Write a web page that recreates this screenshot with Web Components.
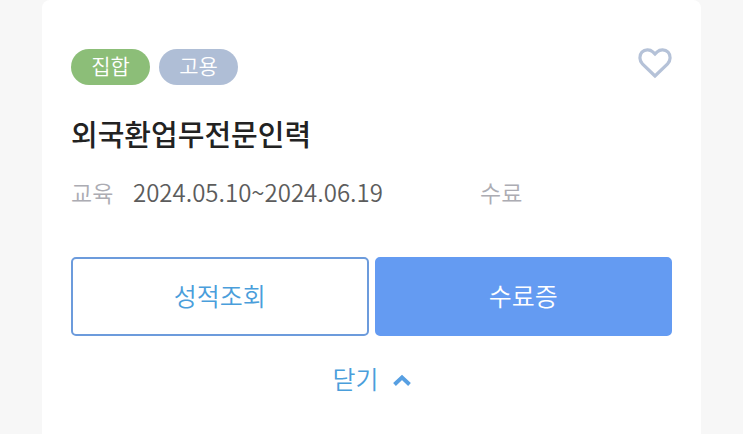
<!DOCTYPE html>
<html lang="ko">
<head>
<meta charset="utf-8">
<meta name="viewport" content="width=device-width, initial-scale=1">
<title>외국환업무전문인력</title>
<style>
body { margin: 0; min-height: 100vh; background: #f7f7f7; font-family: "Noto Sans CJK KR", sans-serif; color: #222; }
</style>
</head>
<body>
<course-card>
  <course-tag slot="tags">집합</course-tag>
  <course-tag slot="tags" tone="blue">고용</course-tag>
  <like-button slot="like"></like-button>
  <span slot="title">외국환업무전문인력</span>
  <course-meta slot="meta" label="교육" status="수료">2024.05.10~2024.06.19</course-meta>
  <action-button slot="actions">성적조회</action-button>
  <action-button slot="actions" tone="solid">수료증</action-button>
  <fold-toggle slot="toggle">닫기</fold-toggle>
</course-card>
<script>
const define = (name, html, setup) => customElements.define(name, class extends HTMLElement {
  constructor() {
    super();
    this.attachShadow({ mode: "open" }).innerHTML = html;
  }
  connectedCallback() { if (setup) setup(this, this.shadowRoot); }
});

define("course-tag", `
<style>
:host { display: flex; align-items: center; justify-content: center; box-sizing: border-box; min-width: 79px; height: 36px; padding: 0 16px 4px; border-radius: 18px; background: #8cbe78; color: #fff; font-size: 21px; line-height: 28px; font-weight: 350; }
:host([tone="blue"]) { background: #afbed6; }
</style><slot></slot>`);

define("like-button", `
<style>
:host { display: block; }
button { display: block; border: 0; padding: 0; background: none; cursor: pointer; }
svg { display: block; }
</style>
<button type="button" aria-label="관심 과정"><svg width="34" height="32" viewBox="0 0 34 32" fill="none" stroke="#b5c2d8" stroke-width="3.2" stroke-linejoin="miter"><path d="M17 28L4.400 15.800C1.200 12.600 1.100 7.200 3.900 4.200C6.900 1.100 11.800 1 14.800 3.800L17 6L19.200 3.800C22.200 1 27.100 1.100 30.100 4.200C32.900 7.200 32.800 12.600 29.600 15.800Z"/></svg></button>`);

define("course-meta", `
<style>
:host { display: grid; grid-template-columns: 62px minmax(0, 347px) auto; align-items: center; font-size: 24px; line-height: 32px; font-weight: 350; color: #5c5c5c; white-space: nowrap; }
.muted { color: #acacb3; font-size: 23px; }
</style>
<span class="muted" id="label"></span><slot></slot><span class="muted" id="status"></span>`,
(el, root) => {
  for (const id of ["label", "status"]) root.getElementById(id).textContent = el.getAttribute(id);
});

define("action-button", `
<style>
:host { display: block; }
button { display: block; box-sizing: border-box; width: 100%; height: 79px; padding: 0 8px 4px; border: 2px solid #6c9bdc; border-radius: 5px; background: #fff; color: #4a9edb; font-family: inherit; font-weight: 350; font-size: 25px; line-height: 36px; cursor: pointer; }
:host([tone="solid"]) button { border-color: #649bf2; background: #649bf2; color: #fff; }
</style><button type="button"><slot></slot></button>`);

define("fold-toggle", `
<style>
:host { display: flex; justify-content: center; }
button { display: flex; align-items: center; gap: 14px; border: 0; padding: 0; background: none; color: #4a9edb; font-family: inherit; font-weight: 350; font-size: 25px; line-height: 36px; cursor: pointer; }
svg { display: block; margin-top: 4px; }
</style><button type="button" aria-expanded="true"><slot></slot><svg width="18" height="12" viewBox="0 0 18 12" fill="none" stroke="#579fe2" stroke-width="4"><path d="M1.500 10.500L9 3.400L16.500 10.500"/></svg></button>`);

define("course-card", `
<style>
:host { display: block; box-sizing: border-box; min-height: 100vh; margin: 0 42px; padding: 48px 29px 36px; border-radius: 8px 8px 0 0; background: #fff; }
header { display: flex; justify-content: space-between; align-items: flex-start; }
.tags { display: flex; gap: 9px; padding-top: 1px; }
h2 { margin: 28px 0 0; font-size: 29px; line-height: 40px; font-weight: 500; color: #222; }
.meta { margin-top: 23px; }
.actions { display: grid; grid-template-columns: 1fr 1fr; gap: 6px; margin-top: 49px; }
.toggle { margin-top: 24px; }
</style>
<header><div class="tags"><slot name="tags"></slot></div><slot name="like"></slot></header>
<h2><slot name="title"></slot></h2>
<div class="meta"><slot name="meta"></slot></div>
<div class="actions"><slot name="actions"></slot></div>
<div class="toggle"><slot name="toggle"></slot></div>`);
</script>
</body>
</html>
